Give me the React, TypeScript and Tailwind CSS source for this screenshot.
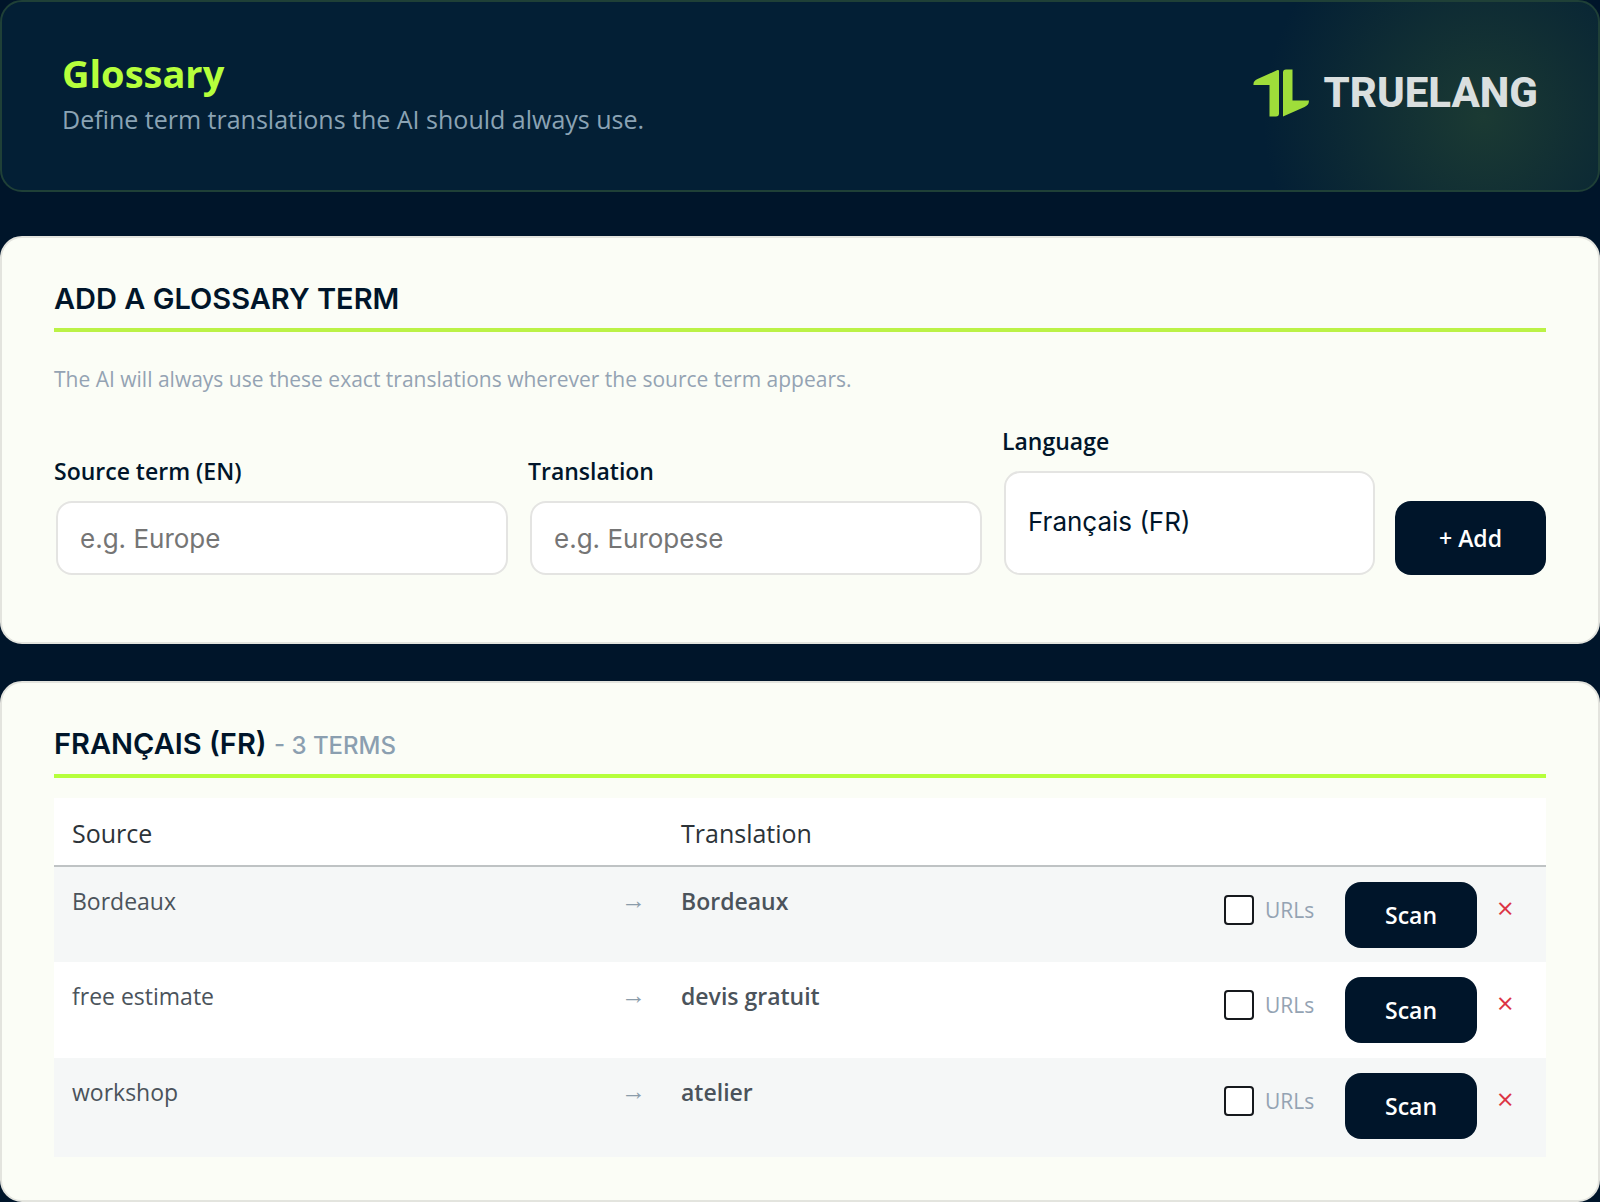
import React from 'react';

type Term = { source: string; translation: string };

const terms: Term[] = [
  { source: 'Bordeaux', translation: 'Bordeaux' },
  { source: 'free estimate', translation: 'devis gratuit' },
  { source: 'workshop', translation: 'atelier' },
];

const fieldClass =
  "mx-0.5 min-w-0 rounded-2xl border-2 border-[#e4e4e2] bg-white px-[22px] font-['Inter',sans-serif] text-[26px] text-[#00152a] placeholder:text-[#757575] outline-none";

const labelClass = 'mb-3.5 text-[23px] leading-8 font-semibold text-[#00152a]';

const Logo: React.FC = () => (
  <div className="flex items-center gap-3.5">
    <svg width="56" height="48" viewBox="0 0 56 48" fill="#9fdd3a" aria-hidden="true">
      <path d="M24.500 1Q26 0.500 26 2V44.500Q26 47.500 23 47.500H16.500V16H0.500Q0 12 4.500 10Z" />
      <path d="M30 47.500V3.500Q30 0.500 33 0.500H39.500V31.500H56Q56 36 51.500 38Z" />
    </svg>
    <span className="font-['Roboto',sans-serif] text-[42px] leading-[48px] font-extrabold text-[#dadfdf]">
      TRUELANG
    </span>
  </div>
);

const Header: React.FC = () => (
  <header className="flex items-center justify-between rounded-[22px] border-2 border-[#1f4037] bg-[#031f35] bg-[radial-gradient(circle_220px_at_calc(100%-115px)_115px,#1b3a33,#031f3500)] px-[60px] pt-[47px] pb-[53px]">
    <div>
      <h1 className="text-[38px] leading-[48px] font-bold text-[#b6ff3c]">Glossary</h1>
      <p className="mt-1 text-[25px] leading-9 text-[#8ba3b4]">
        Define term translations the AI should always use.
      </p>
    </div>
    <Logo />
  </header>
);

const AddTerm: React.FC = () => (
  <section className="mt-11 rounded-[22px] border-2 border-[#e3e4de] bg-[#fbfdf6] px-[52px] pt-[43px] pb-[67px]">
    <h2 className="border-b-4 border-[#bbf246] pb-[11px] font-['Inter',sans-serif] text-[29px] leading-9 font-semibold text-[#00152a]">
      ADD A GLOSSARY TERM
    </h2>
    <p className="mt-[30px] text-[21px] leading-[34px] text-[#94a3b3]">
      The AI will always use these exact translations wherever the source term appears.
    </p>
    <form
      className="mt-[29px] grid grid-cols-[456fr_456fr_375fr_151px] items-end gap-[18px]"
      onSubmit={(e) => e.preventDefault()}
    >
      <div className="flex min-w-0 flex-col">
        <label htmlFor="source" className={labelClass}>Source term (EN)</label>
        <input id="source" type="text" placeholder="e.g. Europe" className={`${fieldClass} h-[74px]`} />
      </div>
      <div className="flex min-w-0 flex-col">
        <label htmlFor="translation" className={labelClass}>Translation</label>
        <input id="translation" type="text" placeholder="e.g. Europese" className={`${fieldClass} h-[74px]`} />
      </div>
      <div className="flex min-w-0 flex-col">
        <label htmlFor="language" className={labelClass}>Language</label>
        <select id="language" className={`${fieldClass} h-[104px] appearance-none pb-1`}>
          <option>Français (FR)</option>
        </select>
      </div>
      <button type="submit" className="h-[74px] rounded-2xl bg-[#00152a] text-[23px] font-semibold text-white">
        + Add
      </button>
    </form>
  </section>
);

const TermRow: React.FC<{ term: Term; index: number }> = ({ term, index }) => (
  <tr className="h-24 align-top text-[23px] leading-8 text-[#4b535b] last:h-[99px] odd:bg-[#f5f7f7] even:bg-white">
    <td className="px-[18px] pt-[18px]">{term.source}</td>
    <td className="pt-[18px] pl-[15px] text-[25px] leading-7 text-[#8b9caa]">→</td>
    <td className="px-[18px] pt-[18px] font-semibold">{term.translation}</td>
    <td className="px-[18px] pt-[15px]">
      <div className="flex items-start">
        <label
          htmlFor={`urls-${index}`}
          className="mt-3 flex w-[121px] items-center gap-[11px] text-[21px] text-[#94a3b3]"
        >
          <input
            id={`urls-${index}`}
            type="checkbox"
            className="size-[30px] appearance-none rounded border-2 border-[#16191d] bg-white"
          />
          URLs
        </label>
        <button className="h-[66px] w-[132px] rounded-2xl bg-[#00152a] text-[23px] font-semibold text-white">
          Scan
        </button>
        <button aria-label={`Delete ${term.source}`} className="mt-2.5 ml-5 text-[29px] text-[#dc3545]">
          ×
        </button>
      </div>
    </td>
  </tr>
);

const TermList: React.FC = () => (
  <section className="mt-[37px] rounded-[22px] border-2 border-[#e3e4de] bg-[#fbfdf6] px-[52px] pt-[42px] pb-[43px]">
    <h2 className="border-b-4 border-[#b6ff3c] pb-[11px] font-['Inter',sans-serif] text-[29px] leading-[38px] font-semibold text-[#00152a]">
      FRANÇAIS (FR) <span className="text-[24px] leading-none font-medium text-[#8b9fb0]">- 3 TERMS</span>
    </h2>
    <table className="mt-5 w-full table-fixed border-collapse text-left">
      <thead>
        <tr className="h-[68px] border-b-2 border-[#bfc3c4] bg-white text-[25px] text-[#2c3338]">
          <th className="w-[37%] px-[18px] pt-1 font-normal">Source</th>
          <th className="w-[57px]" />
          <th className="px-[18px] pt-1 font-normal">Translation</th>
          <th className="w-[340px]" />
        </tr>
      </thead>
      <tbody>
        {terms.map((term, index) => (
          <TermRow key={term.source} term={term} index={index} />
        ))}
      </tbody>
    </table>
  </section>
);

const App: React.FC = () => {
  return (
    <div className="min-h-screen bg-[#00152a] font-['Open_Sans',sans-serif]">
      <Header />
      <main>
        <AddTerm />
        <TermList />
      </main>
    </div>
  );
};

export default App;
